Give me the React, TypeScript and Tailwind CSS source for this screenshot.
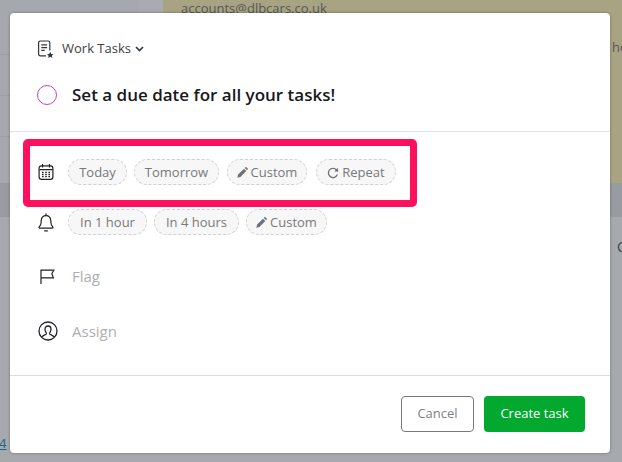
import React from 'react';

const font = { fontFamily: '"Open Sans", "Noto Sans", sans-serif' };

const CalendarIcon = () => (
    <svg width="16" height="18" viewBox="0 0 16 18" fill="none" stroke="#1f2125" strokeWidth="1.2">
        <rect x="1.1" y="2.8" width="13.8" height="13.6" rx="2.4" />
        <path d="M1.5 6.6h13M4.5 1v3.4M11.5 1v3.4" />
        <path d="M4 9.5h1.6M7.2 9.5h1.6M10.4 9.5h1.6M4 11.6h1.6M7.2 11.6h1.6M10.4 11.6h1.6M4 13.7h1.6M7.2 13.7h1.6M10.4 13.7h1.6" strokeWidth="1.3" />
    </svg>
);

const BellIcon = () => (
    <svg width="16" height="19" viewBox="0 0 16 19" fill="none" stroke="#1f2125" strokeWidth="1.2">
        <path d="M1 14.6c0-1 1.8-1.6 2-4.4l.2-2.6C3.5 4.4 5.4 2.6 8 2.6s4.5 1.8 4.8 5l.2 2.6c.2 2.8 2 3.4 2 4.4 0 .3-.2.5-.6.5H1.6c-.4 0-.6-.2-.6-.5z" />
        <path d="M8 .6v2M6.2 17.8h3.6" />
    </svg>
);

const FlagIcon = () => (
    <svg width="15" height="15" viewBox="0 0 15 15" fill="none" stroke="#1f2125" strokeWidth="1.2">
        <path d="M1 15V1.2h12.8l-2 3.6 1.6 4H1" />
    </svg>
);

const UserCircleIcon = () => (
    <svg width="20" height="20" viewBox="0 0 20 20" fill="none" stroke="#1f2125" strokeWidth="1.3">
        <circle cx="10" cy="10" r="9" />
        <path d="M3.9 16c.6-1.7 2.9-2 4.3-2.8.5-.6.2-1.3-.3-2-.5-.8-.9-1.6-.9-2.8C7 6.300 8.200 5 10 5s3 1.300 3 3.400c0 1.200-.4 2-.9 2.800-.5.7-.8 1.400-.3 2 1.400.8 3.700 1.100 4.300 2.800" />
    </svg>
);

const ListStarIcon = () => (
    <svg width="18" height="18" viewBox="0 0 18 18" fill="none" stroke="#33363b" strokeWidth="1.2">
        <path d="M9 15.800H3.300c-1 0-1.700-.7-1.700-1.700V2.600c0-.9.700-1.600 1.700-1.600h7.800c1 0 1.700.7 1.700 1.600v8" />
        <path d="M4.300 4.800h5.800M4.300 7.600h5.800M4.300 10.400h3.400" />
        <path d="M13.200 11.800l1 2.100 2.300.3-1.700 1.500.5 2.200-2.100-1.100-2 1.100.4-2.200-1.600-1.500 2.200-.3z" fill="#33363b" stroke="none" />
    </svg>
);

const ChevronIcon = () => (
    <svg width="9" height="6" viewBox="0 0 9 6" fill="none" stroke="#33363b" strokeWidth="1.6">
        <path d="M1 1l3.500 3.500L8 1" />
    </svg>
);

const PencilIcon = () => (
    <svg width="11" height="11" viewBox="0 0 11 11" fill="#6f7175">
        <path d="M0.300 10.700l.8-3.100L7 1.700l2.300 2.300-5.900 5.900zM7.800.900l.6-.6c.3-.3.700-.3 1 0l1.300 1.300c.3.300.3.700 0 1l-.6.6z" />
    </svg>
);

const RepeatIcon = () => (
    <svg width="12" height="12" viewBox="0 0 12 12" fill="none" stroke="#6f7175" strokeWidth="1.300">
        <path d="M10.300 7.600A4.600 4.600 0 1 1 9.500 2.900L10.800 4.300" />
        <path d="M11 .8v3.800H7.200" fill="#6f7175" stroke="none" />
    </svg>
);

const Pill = ({ label, icon, width }: { label: string; icon?: React.ReactNode; width: string }) => (
    <span className={`flex items-center justify-center gap-[3px] h-[26px] pt-px rounded-full border border-dashed border-[#cfd0d2] bg-[#f7f7f7] text-[13px] text-[#77797c] ${width}`}>
        {icon}
        {label}
    </span>
);

const App = () => {
    return (
        <div className="relative w-[622px] h-[462px] overflow-hidden bg-[#a6a9ad]" style={font}>
            {/* Page behind the dialog */}
            <div className="flex h-[183px]">
                <div className="w-[139px] bg-[#a5a8ac]">
                    <div className="h-[55px] border-b border-[#9c9fa3]" />
                    <div className="h-[41px] border-b border-[#9c9fa3]" />
                    <div className="h-[41px] border-b border-[#9c9fa3]" />
                </div>
                <div className="w-[24px] bg-[#a8abaf]" />
                <div className="flex-1 bg-[#a8a382] px-[18px] text-[13px] leading-[16px] text-[#55565a]">accounts@dlbcars.co.uk</div>
            </div>
            <div className="h-[34px] bg-[#989b9f]" />
            <span className="absolute left-[612px] top-[38px] text-[13px] text-[#55565a]">ho</span>
            <span className="absolute left-[617px] top-[236px] text-[14px] text-[#3d3f43]">O</span>
            <span className="absolute left-[-1px] top-[434px] text-[13px] underline text-[#1f6384]">4</span>

            {/* Dialog */}
            <div className="absolute left-[10px] top-[13px] w-[600px] h-[440px] flex flex-col rounded-[4px] bg-white shadow-[0_0_3px_rgba(0,0,0,0.35)]">
                <div className="flex items-center h-[18px] mt-[27px] ml-[27px] text-[13px] text-[#3c3e42]">
                    <ListStarIcon />
                    <span className="ml-[7px] mr-[4px]">Work Tasks</span>
                    <ChevronIcon />
                </div>
                <div className="flex items-center h-[24px] mt-[25px] ml-[27px]">
                    <span className="w-[20px] h-[20px] rounded-full border-[1.7px] border-[#b14cc9]" />
                    <span className="ml-[15px] text-[17px] font-[550] text-[#17181a]">Set a due date for all your tasks!</span>
                </div>
                <div className="mt-[24px] h-px bg-[#e3e3e3]" />

                <div className="flex items-center mt-[27px] h-[26px] pl-[28px]">
                    <span className="flex justify-center w-[16px]"><CalendarIcon /></span>
                    <div className="flex ml-[14px]">
                        <Pill label="Today" width="w-[59px]" />
                        <Pill label="Tomorrow" width="w-[85px] ml-[7px]" />
                        <Pill label="Custom" icon={<PencilIcon />} width="w-[80px] ml-[8px]" />
                        <Pill label="Repeat" icon={<RepeatIcon />} width="w-[80px] ml-[9px]" />
                    </div>
                </div>
                <div className="flex items-center mt-[24px] h-[26px] pl-[28px]">
                    <span className="flex justify-center w-[16px]"><BellIcon /></span>
                    <div className="flex ml-[14px] gap-[7px]">
                        <Pill label="In 1 hour" width="w-[79px]" />
                        <Pill label="In 4 hours" width="w-[85px]" />
                        <Pill label="Custom" icon={<PencilIcon />} width="w-[81px]" />
                    </div>
                </div>
                <div className="flex items-center mt-[28px] h-[26px] pl-[30px] text-[15px] text-[#adaeb0]">
                    <FlagIcon />
                    <span className="ml-[17px]">Flag</span>
                </div>
                <div className="flex items-center mt-[29px] h-[26px] pl-[28px] text-[15px] text-[#adaeb0]">
                    <UserCircleIcon />
                    <span className="ml-[14px]">Assign</span>
                </div>
                <div className="mt-[31px] h-px bg-[#dcdcdc]" />

                <div className="flex justify-end gap-[10px] mt-[20px] pr-[25px]">
                    <button className="w-[73px] h-[36px] rounded-[4px] border border-[#77797c] bg-white text-[13px] text-[#808285]">Cancel</button>
                    <button className="w-[101px] h-[36px] rounded-[4px] bg-[#03a92f] text-[13px] font-medium text-white">Create task</button>
                </div>
            </div>

            {/* Highlight drawn over the screenshot */}
            <div className="absolute left-[23px] top-[139px] w-[394px] h-[68px] rounded-[5px] border-[7px] border-[#ff105f]" />
        </div>
    );
};

export default App;
